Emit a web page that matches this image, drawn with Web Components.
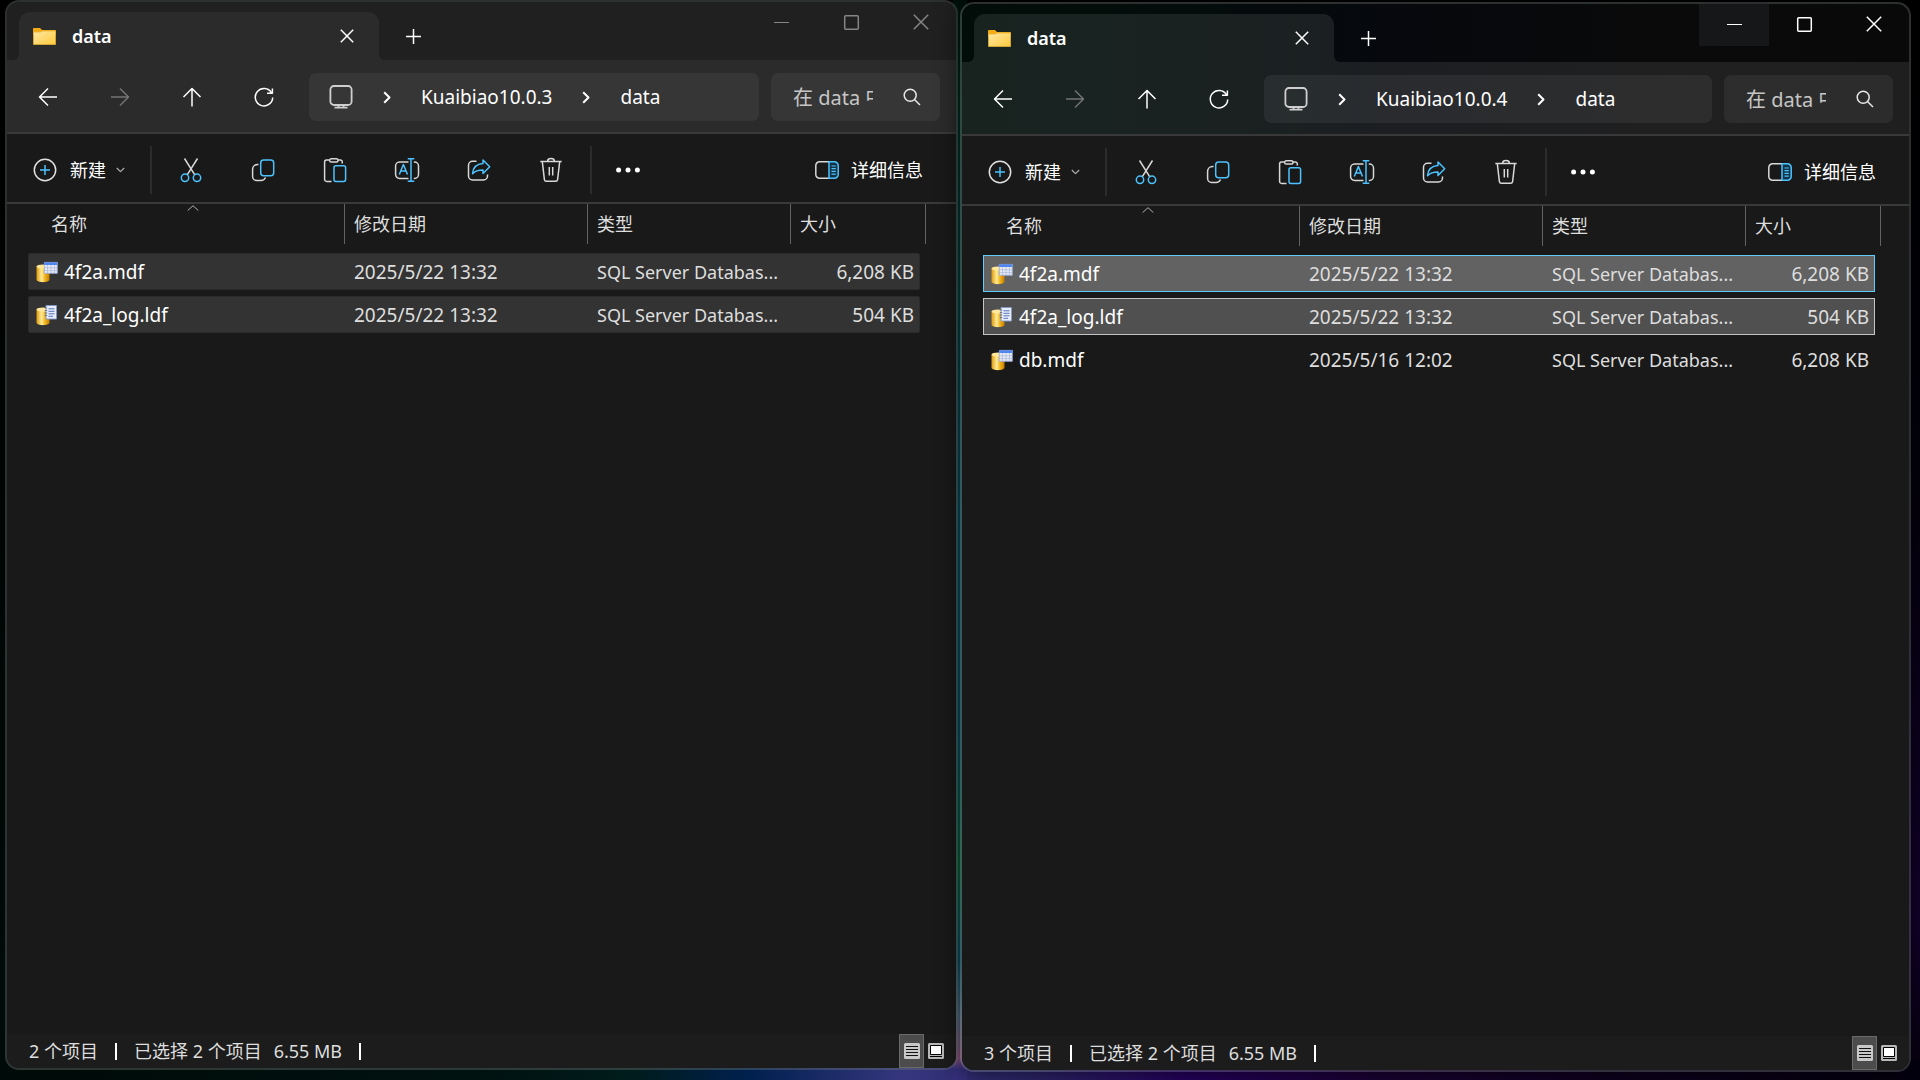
<!DOCTYPE html>
<html lang="zh-CN">

<head>
<meta charset="utf-8">
<title>data</title>
<style>
    * { box-sizing: border-box; }
    body {
        margin: 0;
        min-height: 100vh;
        display: grid;
        grid-template-columns: 953fr 951fr;
        gap: 2px;
        padding: 0 9px 8px 5px;
        overflow: hidden;
        font-family: "Noto Sans", "Noto Sans CJK SC", sans-serif;
        color: #fff;
        background:
            linear-gradient(180deg, #00100a 0, #052a20 10%, #0b4858 50%, #0b4858 68%, #0a5a3a 80%, #104a5e 89%, #4a6478 94%, #84507a 98%, #35307c 99%) 50% 0 / 14px 100% no-repeat,
            linear-gradient(90deg, #000a08 0, #001210 25%, #001c1c 33%, #00204e 39%, #35367e 47%, #2c2468 54%, #25005e 62%, #1a0232 72%, #0c001c 85%, #04000f 100%) 0 100% / 100% 20px no-repeat,
            linear-gradient(180deg, #000 0, #03000c 45%, #12002c 85%, #06000f 100%) 100% 0 / 20px 100% no-repeat,
            linear-gradient(180deg, #000 0, #000b09 100%);
    }
    explorer-window:first-of-type { margin-bottom: 2px; }
    explorer-window:last-of-type { margin-top: 2px; }
</style>
</head>

<body>

    <explorer-window>
        <title-bar slot="title" folder="data"></title-bar>
        <address-bar slot="address" parent="Kuaibiao10.0.3" folder="data"></address-bar>
        <command-bar slot="commands"></command-bar>
        <file-list>
            <file-row kind="mdf" state="dim" name="4f2a.mdf" date="2025/5/22 13:32" type="SQL Server Databas..." size="6,208 KB"></file-row>
            <file-row kind="ldf" state="dim" name="4f2a_log.ldf" date="2025/5/22 13:32" type="SQL Server Databas..." size="504 KB"></file-row>
        </file-list>
        <status-bar slot="status" count="2 个项目" selected="已选择 2 个项目" total="6.55 MB"></status-bar>
    </explorer-window>

    <explorer-window active>
        <title-bar slot="title" folder="data" active></title-bar>
        <address-bar slot="address" parent="Kuaibiao10.0.4" folder="data"></address-bar>
        <command-bar slot="commands"></command-bar>
        <file-list>
            <file-row kind="mdf" state="hover" name="4f2a.mdf" date="2025/5/22 13:32" type="SQL Server Databas..." size="6,208 KB"></file-row>
            <file-row kind="ldf" state="selected" name="4f2a_log.ldf" date="2025/5/22 13:32" type="SQL Server Databas..." size="504 KB"></file-row>
            <file-row kind="mdf" name="db.mdf" date="2025/5/16 12:02" type="SQL Server Databas..." size="6,208 KB"></file-row>
        </file-list>
        <status-bar slot="status" count="3 个项目" selected="已选择 2 个项目" total="6.55 MB"></status-bar>
    </explorer-window>

<script>

const BLUE = "#4cc2ff";

// name: [width, height, markup]
const ICONS = {
    folder: [23, 17, `
        <defs><linearGradient id="f" x1="0" y1="0" x2="1" y2="1"><stop offset="0" stop-color="#ffe9a6"/><stop offset="1" stop-color="#ffc93c"/></linearGradient></defs>
        <path d="M0 1a1 1 0 0 1 1-1h6l2 2H22a1 1 0 0 1 1 1v4H0z" fill="#f5ac14" stroke="none"/>
        <path d="M.5 4H7.500l1.500-1H22.500V16.500H.5z" fill="url(#f)" stroke="#e5b035" stroke-width=".8"/>`],
    close: [14, 14, `<path d="M.8.8 13.200 13.200M13.200.8.8 13.200"/>`],
    winClose: [16, 16, `<path d="M.8.8 15.200 15.200M15.200.8.8 15.200"/>`],
    plus: [15, 15, `<path d="M7.500 0V15M0 7.500H15"/>`],
    minimize: [15, 15, `<path d="M0 7.500H15" stroke-width="1"/>`],
    maximize: [15, 15, `<rect x=".7" y=".7" width="13.600" height="13.600" rx="1"/>`],
    back: [24, 24, `<path d="M3.500 12H21M12 3.500 3.500 12 12 20.500"/>`],
    forward: [24, 24, `<path d="M21 12H3M12 3.500 20.500 12 12 20.500"/>`],
    up: [24, 24, `<path d="M12 3.500V21.500M3.500 12 12 3.500 20.500 12"/>`],
    refresh: [24, 24, `<path d="M20.700 12.500A8.700 8.700 0 1 1 19.500 7.800M20.400 3.500V8.300H15"/>`],
    monitor: [24, 24, `<g stroke="#cfcfcf" stroke-width="1.800"><rect x="1.400" y="1" width="21.200" height="19" rx="3.500"/><path d="M9.500 20v2.500M14.500 20v2.500M5.500 22.600h13"/></g>`],
    chevron: [8, 13, `<path d="M1.200 1.200 6.500 6.500 1.200 11.800" stroke-width="2"/>`],
    search: [18, 18, `<circle cx="7.200" cy="7.200" r="6"/><path d="M11.500 11.500 17 17"/>`],
    add: [24, 24, `<circle cx="12" cy="12" r="10.700" stroke="#e0e0e0"/><path d="M12 7v10M7 12h10" stroke="${BLUE}"/>`],
    down: [9, 6, `<path d="M.8 1 4.500 4.600 8.200 1" stroke="#a8a8a8" stroke-width="1.300"/>`],
    caret: [12, 6, `<path d="M.7 5.500 6 .7 11.300 5.500" stroke="#b0b0b0" stroke-width="1"/>`],
    cut: [24, 24, `<path d="M5.500.5 15.800 16.800M18.500.5 8.200 16.800" stroke="#d8d8d8"/><g stroke="${BLUE}"><circle cx="6" cy="19.800" r="3.700"/><circle cx="18" cy="19.800" r="3.700"/></g>`],
    copy: [24, 24, `<path d="M7.500 6.500H6.500A5 5 0 0 0 1.600 11.500V18.500A4 4 0 0 0 5.600 22.500H9.500A5 5 0 0 0 14.500 19.500" stroke="#d8d8d8"/><rect x="9.700" y="2" width="13" height="15.700" rx="3" stroke="${BLUE}"/>`],
    paste: [24, 24, `<path d="M6.500 2H3.500A2 2 0 0 0 1.600 4V21.400A2 2 0 0 0 3.600 23.400H8.500M15 2H17.500A2 2 0 0 1 19.300 4V5.500" stroke="#d8d8d8"/><rect x="6.600" y=".7" width="8.400" height="3.400" rx="1.700" stroke="#d8d8d8"/><rect x="11" y="7.800" width="11.600" height="15.600" rx="1.800" stroke="${BLUE}"/>`],
    rename: [26, 24, `<g transform="translate(1)"><path d="M13.500 4H4.500A4 4 0 0 0 .6 8V16.500A4 4 0 0 0 4.600 20.500H13.500M18.800 4H19.500A4 4 0 0 1 23.500 8V16.500A4 4 0 0 1 19.500 20.500H18.800" stroke="#d8d8d8"/><path d="M4.300 16.500 8.400 6.500 12.500 16.500M5.800 13H11M16 .8V23.300M12.700.8H19.300M12.700 23.300H19.300" stroke="${BLUE}"/></g>`],
    share: [24, 24, `<path d="M9.500 3.300H5.500A4 4 0 0 0 1.500 7.300V18A4 4 0 0 0 5.500 22H16.500A4 4 0 0 0 20.500 18V16.500" stroke="#d8d8d8"/><path d="M16 2 22.700 8.800 16 15.500V12C11 12 8 13 5.500 15.700 6 9.500 10 6 16 5.600z" stroke="${BLUE}"/>`],
    trash: [24, 24, `<path d="M1.300 3.400H22.700M8.600 3.200a3.400 2.600 0 0 1 6.800 0M3.300 3.600 5.400 21.600A2 2 0 0 0 7.400 23.300H16.600A2 2 0 0 0 18.600 21.600L20.700 3.600M10.300 9V17.500M13.700 9V17.500" stroke="#d8d8d8"/>`],
    more: [24, 6, `<g fill="currentColor" stroke="none"><circle cx="2.600" cy="3" r="2.500"/><circle cx="12" cy="3" r="2.500"/><circle cx="21.400" cy="3" r="2.500"/></g>`],
    details: [24, 18, `<path d="M14 .8H4.500A3.700 3.700 0 0 0 .8 4.500V13.500A3.700 3.700 0 0 0 4.500 17.200H14" stroke="#d8d8d8"/><path d="M14 .8H19.500A3.700 3.700 0 0 1 23.200 4.500V13.500A3.700 3.700 0 0 1 19.500 17.200H14z" fill="#133447" stroke="${BLUE}"/><path d="M16.500 5H20.800M16.500 7.700H20.800M16.500 10.400H20.800M16.500 13.100H20.800" stroke="${BLUE}" stroke-width="1.200"/>`],
    mdf: [22, 22, `
        <defs><linearGradient id="c"><stop offset="0" stop-color="#e09a08"/><stop offset=".4" stop-color="#ffec9a"/><stop offset=".65" stop-color="#f2b51c"/><stop offset="1" stop-color="#c47d00"/></linearGradient></defs>
        <g stroke="none"><path d="M.5 5.500V18.500C.5 22 13.500 22 13.500 18.500V5.500z" fill="url(#c)"/><ellipse cx="7" cy="5.500" rx="6.500" ry="2" fill="#ffe89a"/>
        <rect x="8" y="1" width="13.500" height="11.500" fill="#e6eaf5"/><path d="M8 1H21.500V4H8z" fill="#4f86f0"/></g>
        <path d="M8 6.800H21.500M8 9.600H21.500M11.500 4V12.500M15 4V12.500M18.500 4V12.500" stroke="#a9b7da" stroke-width=".7"/><rect x="8.300" y="1.300" width="13" height="11" stroke="#7d97cf" stroke-width=".6"/>`],
    ldf: [22, 22, `
        <defs><linearGradient id="c"><stop offset="0" stop-color="#e09a08"/><stop offset=".4" stop-color="#ffec9a"/><stop offset=".65" stop-color="#f2b51c"/><stop offset="1" stop-color="#c47d00"/></linearGradient></defs>
        <g stroke="none"><path d="M.5 5.500V18.500C.5 22 13.500 22 13.500 18.500V5.500z" fill="url(#c)"/><ellipse cx="7" cy="5.500" rx="6.500" ry="2" fill="#ffe89a"/></g>
        <rect x="10" y="1.500" width="10.500" height="13.500" fill="#e6edfc" stroke="#8497c8" stroke-width=".9"/>
        <path d="M12.500 4.800H18.500M12.500 7.300H18.500M12.500 9.800H18.500M12.500 12.300H17" stroke="#5872b8" stroke-width="1"/><path d="M8.800 4h2.400M8.800 6.500h2.400M8.800 9h2.400M8.800 11.500h2.400" stroke="#55607d" stroke-width=".8"/>`],
    viewList: [16, 16, `<rect width="16" height="16" rx="1.500" fill="#c8c8c8" stroke="none"/><path d="M2 3.500H14M2 6.500H14M2 9.500H14M2 12.500H14" stroke="#111" stroke-width="1"/>`],
    viewLarge: [16, 16, `<rect width="16" height="16" rx="1.500" fill="#b8b8b8" stroke="none"/><rect x="2.500" y="2.500" width="11" height="9" fill="#fff" stroke="#000" stroke-width="1"/><path d="M2 13.500H14" stroke="#000" stroke-width="1"/>`]
};

class UiIcon extends HTMLElement {
    constructor() {
        super();
        this.attachShadow({ mode: "open" });
    }

    connectedCallback() {
        const [w, h, body] = ICONS[this.getAttribute("name")];
        this.shadowRoot.innerHTML = `
<style>
    :host { display: inline-flex; flex: none; }
    svg { display: block; overflow: visible; }
</style>
<svg width="${w}" height="${h}" viewBox="0 0 ${w} ${h}" fill="none" stroke="currentColor" stroke-width="1.500" stroke-linejoin="round" aria-hidden="true">${body}</svg>`;
    }
}

// shared reset for every element that holds buttons
const BUTTON_CSS = `
    :host, * { box-sizing: border-box; }
    button {
        display: inline-flex;
        align-items: center;
        justify-content: center;
        flex: none;
        margin: 0;
        padding: 0;
        border: 0;
        background: none;
        color: inherit;
        font: inherit;
    }
`;

class ExplorerWindow extends HTMLElement {
    constructor() {
        super();
        this.attachShadow({ mode: "open" });
        this.shadowRoot.innerHTML = `
<style>
    :host {
        --tint: rgba(255, 255, 255, .05);
        --field: rgba(255, 255, 255, .055);
        display: flex;
        flex-direction: column;
        box-sizing: border-box;
        min-width: 0;
        border: 2px solid rgba(110, 120, 116, .4);
        border-radius: 14px;
        overflow: hidden;
        background: #202020;
        background-clip: padding-box;
    }
    :host([active]) {
        --tint: rgba(255, 255, 255, .09);
        --field: rgba(255, 255, 255, .06);
        background: linear-gradient(90deg, #020d09 0, #030e0b 15%, #06080d 45%, #0a0a0a 75%, #090909 100%);
        background-clip: padding-box;
        box-shadow: 0 0 24px rgba(0, 0, 0, .6);
    }
    .address { background: var(--tint); border-bottom: 2px solid #393939; }
    .commands { background: #191919; border-bottom: 2px solid #393939; }
    main { flex: 1; background: #191919; }
</style>
<slot name="title"></slot>
<div class="address"><slot name="address"></slot></div>
<div class="commands"><slot name="commands"></slot></div>
<main><slot></slot></main>
<slot name="status"></slot>`;
    }
}

class TitleBar extends HTMLElement {
    constructor() {
        super();
        this.attachShadow({ mode: "open" });
    }

    connectedCallback() {
        this.shadowRoot.innerHTML = `
<style>
    ${BUTTON_CSS}
    :host { display: flex; align-items: flex-end; height: 58px; padding-left: 12px; }
    .tab {
        position: relative;
        display: flex;
        align-items: center;
        gap: 16px;
        width: 360px;
        height: 48px;
        padding: 0 20px 0 14px;
        border-radius: 11px 11px 0 0;
        background: var(--tint);
        font-size: 18px;
        font-weight: 600;
    }
    /* curved feet where the tab meets the bar under it */
    .tab::before, .tab::after {
        content: "";
        position: absolute;
        bottom: 0;
        width: 6px;
        height: 6px;
    }
    .tab::before { right: 100%; background: radial-gradient(circle at 0 0, transparent 6px, var(--tint) 6px); }
    .tab::after { left: 100%; background: radial-gradient(circle at 100% 0, transparent 6px, var(--tint) 6px); }
    .name { flex: 1; }
    .tab button { width: 24px; height: 24px; }
    .new { width: 68px; height: 48px; }
    .controls { display: flex; align-self: flex-start; margin-left: auto; color: #858585; }
    .controls button { width: 70px; height: 42px; padding-bottom: 2px; }
    :host([active]) .controls { color: #fff; }
    :host([active]) .controls button:first-child { background: #151718; }
</style>
<div class="tab">
    <ui-icon name="folder"></ui-icon>
    <span class="name">${this.getAttribute("folder")}</span>
    <button aria-label="关闭标签页"><ui-icon name="close"></ui-icon></button>
</div>
<button class="new" aria-label="添加新标签页"><ui-icon name="plus"></ui-icon></button>
<div class="controls">
    <button aria-label="最小化"><ui-icon name="minimize"></ui-icon></button>
    <button aria-label="最大化"><ui-icon name="maximize"></ui-icon></button>
    <button aria-label="关闭"><ui-icon name="winClose"></ui-icon></button>
</div>`;
    }
}

class AddressBar extends HTMLElement {
    constructor() {
        super();
        this.attachShadow({ mode: "open" });
    }

    connectedCallback() {
        const folder = this.getAttribute("folder");
        this.shadowRoot.innerHTML = `
<style>
    ${BUTTON_CSS}
    :host { display: flex; align-items: center; height: 72px; padding: 2px 16px 0 5px; font-size: 20px; line-height: 28px; }
    .nav { width: 72px; height: 48px; }
    .nav:disabled { color: #747474; }
    .path {
        display: flex;
        align-items: center;
        flex: 1;
        height: 48px;
        margin: 0 12px 0 9px;
        padding-left: 20px;
        border-radius: 7px;
        background: var(--field);
        font-size: 19px;
    }
    .path ui-icon[name=chevron] { margin: 0 30px; }
    .search {
        display: flex;
        align-items: center;
        justify-content: space-between;
        width: 169px;
        height: 48px;
        padding: 0 18px 0 22px;
        border-radius: 7px;
        background: var(--field);
    }
    input {
        width: 80px;
        height: 30px;
        margin: 0;
        padding: 0;
        border: 0;
        outline: 0;
        background: none;
        color: #fff;
        font: inherit;
    }
    input::placeholder { color: #c6c6c6; opacity: 1; }
    .search button { width: 20px; height: 30px; color: #e6e6e6; }
</style>
<button class="nav" aria-label="后退"><ui-icon name="back"></ui-icon></button>
<button class="nav" aria-label="前进" disabled><ui-icon name="forward"></ui-icon></button>
<button class="nav" aria-label="向上"><ui-icon name="up"></ui-icon></button>
<button class="nav" aria-label="刷新"><ui-icon name="refresh"></ui-icon></button>
<div class="path">
    <ui-icon name="monitor"></ui-icon>
    <ui-icon name="chevron"></ui-icon>
    <button>${this.getAttribute("parent")}</button>
    <ui-icon name="chevron"></ui-icon>
    <button>${folder}</button>
</div>
<div class="search">
    <input type="text" aria-label="搜索" placeholder="在 ${folder} 中搜索">
    <button aria-label="搜索"><ui-icon name="search"></ui-icon></button>
</div>`;
    }
}

class CommandBar extends HTMLElement {
    constructor() {
        super();
        this.attachShadow({ mode: "open" });
        this.shadowRoot.innerHTML = `
<style>
    ${BUTTON_CSS}
    :host { display: flex; align-items: center; height: 68px; padding: 4px 33px 0 26px; font-size: 18px; line-height: 26px; }
    .new { gap: 13px; }
    .new ui-icon[name=down] { margin-left: -3px; }
    .tool { width: 72px; height: 48px; }
    i { width: 2px; height: 48px; background: #2c2c2c; }
    .new + i { margin: 0 3px 0 25px; }
    .tool + i { margin: 0 0 0 3px; }
    .details { gap: 12px; margin-left: auto; }
</style>
<button class="new"><ui-icon name="add"></ui-icon>新建<ui-icon name="down"></ui-icon></button>
<i></i>
<button class="tool" aria-label="剪切"><ui-icon name="cut"></ui-icon></button>
<button class="tool" aria-label="复制"><ui-icon name="copy"></ui-icon></button>
<button class="tool" aria-label="粘贴"><ui-icon name="paste"></ui-icon></button>
<button class="tool" aria-label="重命名"><ui-icon name="rename"></ui-icon></button>
<button class="tool" aria-label="共享"><ui-icon name="share"></ui-icon></button>
<button class="tool" aria-label="删除"><ui-icon name="trash"></ui-icon></button>
<i></i>
<button class="tool" aria-label="查看更多"><ui-icon name="more"></ui-icon></button>
<button class="details"><ui-icon name="details"></ui-icon>详细信息</button>`;
    }
}

// data holder: file-list turns each one into a table row
class FileRow extends HTMLElement {
    get cells() {
        return ["name", "date", "type", "size"].map(key => this.getAttribute(key));
    }
}

class FileList extends HTMLElement {
    constructor() {
        super();
        this.attachShadow({ mode: "open" });
    }

    connectedCallback() {
        const rows = [...this.querySelectorAll("file-row")].map(row => {
            const [name, date, type, size] = row.cells;
            return `
    <tr class="${row.getAttribute("state") || ""}">
        <td class="name"><ui-icon name="${row.getAttribute("kind")}"></ui-icon>${name}</td>
        <td>${date}</td>
        <td class="type">${type}</td>
        <td class="size">${size}</td>
    </tr>`;
        }).join("");

        this.shadowRoot.innerHTML = `
<style>
    * { box-sizing: border-box; }
    :host { display: block; padding-left: 21px; }
    table { display: block; width: 898px; font-size: 19px; line-height: 26px; color: #dedede; }
    thead { display: block; margin-bottom: 9px; font-size: 18px; }
    tbody { display: grid; gap: 6px; padding-right: 6px; }
    tr { display: grid; grid-template-columns: 317px 243px 203px 1fr; }
    th {
        display: grid;
        grid-template-rows: 7px 1fr;
        height: 40px;
        padding: 0 0 0 9px;
        border-right: 1px solid #636363;
        font-weight: 400;
        text-align: left;
    }
    th span { grid-row: 2; }
    th ui-icon { grid-row: 1; justify-self: center; align-self: center; }
    th:first-child { padding-left: 14px; }
    th:first-child span { padding-left: 9px; }
    tbody tr { height: 37px; border: 1px solid transparent; border-radius: 2px; }
    td { display: flex; align-items: center; padding: 0 0 0 8px; white-space: nowrap; }
    td.name { gap: 6px; padding-left: 7px; color: #fff; }
    td.type { font-size: 18px; }
    td.size { justify-content: flex-end; padding: 0 5px 0 0; }
    .dim { background: #333; border-color: #2b2b2b; }
    .hover { background: #626262; border-color: #60cdff; border-radius: 0; }
    .selected { background: #505050; border-color: #c4c4c4; border-radius: 0; }
</style>
<table>
    <thead><tr>
        <th><ui-icon name="caret"></ui-icon><span>名称</span></th>
        <th><span>修改日期</span></th>
        <th><span>类型</span></th>
        <th><span>大小</span></th>
    </tr></thead>
    <tbody>${rows}</tbody>
</table>`;
    }
}

class StatusBar extends HTMLElement {
    constructor() {
        super();
        this.attachShadow({ mode: "open" });
    }

    connectedCallback() {
        this.shadowRoot.innerHTML = `
<style>
    ${BUTTON_CSS}
    :host { display: flex; align-items: center; height: 34px; padding: 0 12px 0 22px; background: #1c1c1c; font-size: 18px; line-height: 26px; color: #dedede; }
    i { width: 2px; height: 17px; margin: 0 17px; background: #fff; }
    .total { margin-left: 12px; }
    .views { display: flex; align-items: center; gap: 4px; margin-left: auto; }
    .views button:first-child { width: 25px; height: 34px; border: 1px solid #6a6a6a; background: #4c4c4c; }
</style>
<span>${this.getAttribute("count")}</span>
<i></i>
<span>${this.getAttribute("selected")}</span>
<span class="total">${this.getAttribute("total")}</span>
<i></i>
<div class="views">
    <button aria-label="详细信息视图"><ui-icon name="viewList"></ui-icon></button>
    <button aria-label="大图标视图"><ui-icon name="viewLarge"></ui-icon></button>
</div>`;
    }
}

// Define custom elements, file-row first because file-list reads its rows
customElements.define("ui-icon", UiIcon);
customElements.define("file-row", FileRow);
customElements.define("file-list", FileList);
customElements.define("title-bar", TitleBar);
customElements.define("address-bar", AddressBar);
customElements.define("command-bar", CommandBar);
customElements.define("status-bar", StatusBar);
customElements.define("explorer-window", ExplorerWindow);

</script>

</body>

</html>
